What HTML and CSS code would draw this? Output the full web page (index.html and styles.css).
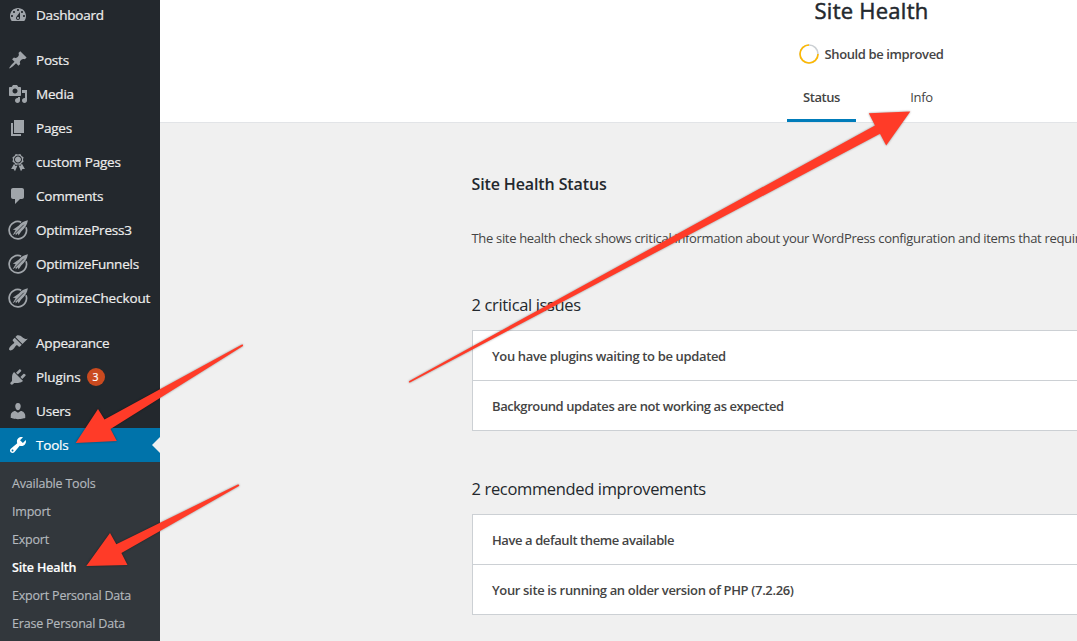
FILE: index.html
```html
<!DOCTYPE html>
<html lang="en">
<head>
<meta charset="utf-8">
<title>Site Health</title>
<link rel="stylesheet" href="styles.css">
</head>
<body>
<div class="admin">
  <nav class="menu">
    <ul class="menu-list">
      <li class="item"><svg class="icon" viewBox="0 0 20 20"><path d="M3.76 16h12.48c1.1-1.37 1.76-3.11 1.76-5 0-4.42-3.58-8-8-8s-8 3.58-8 8c0 1.89.66 3.63 1.76 5zM10 4c.55 0 1 .45 1 1s-.45 1-1 1-1-.45-1-1 .45-1 1-1zM6 6c.55 0 1 .45 1 1s-.45 1-1 1-1-.45-1-1 .45-1 1-1zm8 0c.55 0 1 .45 1 1s-.45 1-1 1-1-.45-1-1 .45-1 1-1zm-5.37 5.55L12 7v6c0 1.1-.9 2-2 2s-2-.9-2-2c0-.57.24-1.08.63-1.45zM4 10c.55 0 1 .45 1 1s-.45 1-1 1-1-.45-1-1 .45-1 1-1zm12 0c.55 0 1 .45 1 1s-.45 1-1 1-1-.45-1-1 .45-1 1-1zm-5 3c0-.55-.45-1-1-1s-1 .45-1 1 .45 1 1 1 1-.45 1-1z"/></svg><span>Dashboard</span></li>
      <li class="item gap"><svg class="icon" viewBox="0 0 20 20"><path d="M10.44 3.02l1.82-1.82 6.36 6.35-1.83 1.82c-1.05-.68-2.48-.57-3.41.36l-.75.75c-.92.93-1.04 2.35-.35 3.41l-1.83 1.82-2.41-2.41-2.8 2.79c-.42.42-3.38 2.71-3.8 2.29s1.86-3.39 2.28-3.81l2.79-2.79L4.1 9.36l1.83-1.82c1.05.69 2.48.57 3.4-.36l.75-.75c.93-.92 1.05-2.35.36-3.41z"/></svg><span>Posts</span></li>
      <li class="item"><svg class="icon" viewBox="0 0 20 20"><path d="M13 11V4c0-.55-.45-1-1-1h-1.67L9 1H5L3.67 3H2c-.55 0-1 .45-1 1v7c0 .55.45 1 1 1h10c.55 0 1-.45 1-1zM7 4.5c1.38 0 2.5 1.12 2.5 2.5S8.38 9.5 7 9.5 4.5 8.38 4.5 7 5.62 4.5 7 4.5zM14 6h5v10.5c0 1.38-1.12 2.5-2.5 2.5S14 17.88 14 16.5s1.12-2.5 2.5-2.5c.17 0 .34.02.5.05V9h-3V6zm-4 8.05V13h2v3.5c0 1.38-1.12 2.5-2.5 2.5S7 17.88 7 16.5 8.12 14 9.5 14c.17 0 .34.02.5.05z"/></svg><span>Media</span></li>
      <li class="item"><svg class="icon" viewBox="0 0 20 20"><path d="M6 15V2h10v13H6zm-1 1h8v2H3V5h2v11z"/></svg><span>Pages</span></li>
      <li class="item"><svg class="icon" viewBox="0 0 20 20"><path d="M4.46 5.16L5 7.46l-.54 2.29 2.01 1.24L7.7 13l2.3-.54 2.3.54 1.23-2.01 2.01-1.24L15 7.46l.54-2.3-2-1.24-1.24-2.01-2.3.55-2.29-.54-1.25 2zm5.55 6.34c-2.21-.01-4-1.8-4-4.01 0-2.2 1.79-3.99 4-3.99 2.2 0 3.99 1.79 3.99 3.99 0 2.22-1.79 4.01-3.99 4.01zm-.02-1C8.33 10.5 7 9.16 7 7.5c0-1.65 1.33-3 2.99-3S13 5.85 13 7.5c0 1.66-1.35 3-3.01 3zm3.84 1.1l-1.28 2.24-2.08-.47L13 19.2l1.4-2.2h2.5zm-7.7.07l1.25 2.25 2.13-.51L7 19.2 5.6 17H3.1z"/></svg><span>custom Pages</span></li>
      <li class="item"><svg class="icon" viewBox="0 0 20 20"><path d="M5 2h9c1.1 0 2 .9 2 2v7c0 1.1-.9 2-2 2h-2l-5 5v-5H5c-1.1 0-2-.9-2-2V4c0-1.1.9-2 2-2z"/></svg><span>Comments</span></li>
      <li class="item"><svg class="icon" viewBox="0 0 20 20"><use href="#rocket"/></svg><span>OptimizePress3</span></li>
      <li class="item"><svg class="icon" viewBox="0 0 20 20"><use href="#rocket"/></svg><span>OptimizeFunnels</span></li>
      <li class="item wide"><svg class="icon" viewBox="0 0 20 20"><use href="#rocket"/></svg><span>OptimizeCheckout</span></li>
      <li class="item gap"><svg class="icon" viewBox="0 0 20 20"><path d="M14.48 11.06L7.41 3.99l1.5-1.5c.5-.56 2.3-.47 3.51.32 1.21.8 1.43 1.28 2.91 2.1 1.18.64 2.45 1.26 4.45.85zm-.71.71L6.7 4.7 4.93 6.47c-.39.39-.39 1.02 0 1.41l1.06 1.06c.39.39.39 1.03 0 1.42-.6.6-1.43 1.11-2.21 1.69-.35.26-.7.53-1.01.84C1.43 14.23.4 16.08 1.4 17.07c.99 1 2.84-.03 4.18-1.36.31-.31.58-.66.85-1.02.57-.78 1.08-1.61 1.69-2.21.39-.39 1.02-.39 1.41 0l1.06 1.06c.39.39 1.02.39 1.41 0z"/></svg><span>Appearance</span></li>
      <li class="item wide"><svg class="icon" viewBox="0 0 20 20"><path d="M13.11 4.36L9.87 7.6 8 5.73l3.24-3.24c.35-.34 1.05-.2 1.56.32.52.51.66 1.21.31 1.55zm-8 1.77l.91-1.12 9.01 9.01-1.19.84c-.71.71-2.63 1.16-3.82 1.16H6.14L4.9 17.26c-.59.59-1.54.59-2.12 0-.59-.58-.59-1.53 0-2.12l1.24-1.24v-3.88c0-1.13.4-3.19 1.09-3.89zm7.26 3.97l3.24-3.24c.34-.35 1.04-.21 1.55.31.52.51.66 1.21.31 1.55l-3.24 3.25z"/></svg><span>Plugins</span><b class="count">3</b></li>
      <li class="item"><svg class="icon" viewBox="0 0 20 20"><path d="M10 9.25c-2.27 0-2.73-3.44-2.73-3.44C7 4.02 7.82 2 9.97 2c2.16 0 2.98 2.02 2.71 3.81 0 0-.41 3.44-2.68 3.44zm0 2.57L12.72 10c2.39 0 4.52 2.33 4.52 4.53v2.49s-3.65 1.13-7.24 1.13c-3.65 0-7.24-1.13-7.24-1.13v-2.49c0-2.25 1.94-4.48 4.47-4.48z"/></svg><span>Users</span></li>
      <li class="item current"><svg class="icon" viewBox="0 0 20 20"><path d="M16.68 9.77c-1.34 1.34-3.3 1.67-4.95.99l-5.41 6.52c-.99.99-2.59.99-3.58 0s-.99-2.59 0-3.57l6.52-5.42c-.68-1.65-.35-3.61.99-4.95 1.28-1.28 3.12-1.62 4.72-1.06l-2.89 2.89 2.82 2.82 2.86-2.87c.53 1.58.18 3.39-1.08 4.65zM3.81 16.21c.4.39 1.04.39 1.43 0 .4-.4.4-1.04 0-1.43-.39-.4-1.03-.4-1.43 0-.39.39-.39 1.03 0 1.43z"/></svg><span>Tools</span></li>
    </ul>
    <ul class="submenu">
      <li>Available Tools</li>
      <li>Import</li>
      <li>Export</li>
      <li class="active">Site Health</li>
      <li>Export Personal Data</li>
      <li>Erase Personal Data</li>
    </ul>
  </nav>
  <main class="page">
    <header class="header">
      <h1 class="title">Site Health</h1>
      <div class="progress">
        <svg class="ring" viewBox="0 0 20 20"><circle class="track" cx="10" cy="10" r="9"/><circle class="value" cx="10" cy="10" r="9" pathLength="100"/></svg>
        <span class="progress-label">Should be improved</span>
      </div>
      <div class="tabs"><span class="tab selected">Status</span><span class="tab">Info</span></div>
    </header>
    <div class="body">
      <h2 class="heading">Site Health Status</h2>
      <p class="intro">The site health check shows critical information about your WordPress configuration and items that require your attention.</p>
      <h3 class="section">2 critical issues</h3>
      <div class="panel">
        <div class="row">You have plugins waiting to be updated</div>
        <div class="row tight">Background updates are not working as expected</div>
      </div>
      <h3 class="section second">2 recommended improvements</h3>
      <div class="panel">
        <div class="row tight">Have a default theme available</div>
        <div class="row">Your site is running an older version of PHP (7.2.26)</div>
      </div>
    </div>
  </main>
</div>
<svg class="arrows" viewBox="0 0 1077 641">
  <defs>
    <g id="rocket">
      <path class="rocket-ring" d="M13.2 2.2A8.7 8.7 0 1 0 18 7.2"/>
      <path d="M19.9 0.3C16.4 0.9 13.2 2.7 10.9 5.4L8.8 7 4.8 9.8 7.6 10.1 6.4 12.2 4.6 15.3 7.9 13.3 7.6 15.6 9.9 13.2 10.5 15.6 13.2 11.4C16.8 8.3 19.2 5 19.9 0.3z"/>
      <path class="rocket-slot" d="M7.4 13.2L15.8 4.7"/>
    </g>
  </defs>
  <path d="M75.7 443L98 409 104.5 419.6 241.5 344.7Q243.5 344 243 346L110.5 429 116.8 441z"/>
  <path d="M86.3 566L110 533 116.3 544.3 237.8 484.6Q239.8 484.2 239 486L121.4 553 127.5 565z"/>
  <path d="M910.3 111.5L868.8 113.3 875 125.4 409.3 381Q408 382.5 410 382.6L880 133.8 886.2 145.5z"/>
</svg>
</body>
</html>
```
FILE: styles.css
```css
* { box-sizing: border-box; }
body {
  margin: 0;
  width: 1077px;
  height: 641px;
  overflow: hidden;
  background: #f0f0f0;
  font-family: "Open Sans", "Noto Sans", sans-serif;
  font-size: 13px;
  color: #444;
}
ul { list-style: none; margin: 0; padding: 0; }
h1, h2, h3, p { margin: 0; }
.admin { display: flex; height: 641px; overflow: hidden; }

.menu { flex: none; width: 160px; background: #23282d; }
.menu-list { margin-top: -2px; }
.item {
  display: flex;
  align-items: center;
  height: 34px;
  padding-left: 8px;
  color: #eee;
  font-size: 13.5px;
  letter-spacing: -0.2px;
  white-space: nowrap;
  -webkit-text-stroke: 0.2px;
}
.item.gap { margin-top: 11px; }
.item.wide { letter-spacing: -0.1px; }
.icon { width: 20px; height: 20px; margin-right: 8px; flex: none; fill: #a0a5aa; }
.rocket-ring { fill: none; stroke: #a0a5aa; stroke-width: 1.7; }
.rocket-slot { fill: none; stroke: #23282d; stroke-width: 0.8; }
.count {
  width: 18px;
  height: 18px;
  margin-left: 6px;
  border-radius: 9px;
  background: #ca4a1f;
  color: #fff;
  font-size: 10.5px;
  font-weight: 500;
  line-height: 18px;
  text-align: center;
}
.item.current { background: #0073aa; color: #fff; }
.item.current .icon { fill: #fff; }
.item.current::after {
  content: "";
  margin-left: auto;
  border: 8px solid transparent;
  border-left: 0;
  border-right-color: #f0f0f0;
}
.submenu { height: 181px; padding: 8px 12px; background: #32373c; }
.submenu li {
  height: 28px;
  line-height: 28px;
  font-size: 12.5px;
  letter-spacing: -0.2px;
  color: #b4b9be;
  white-space: nowrap;
  -webkit-text-stroke: 0.15px;
}
.submenu .active { color: #fff; font-weight: 600; letter-spacing: -0.15px; }

.page { flex: none; width: 1423px; }
.header {
  height: 123px;
  display: flex;
  flex-direction: column;
  align-items: center;
  background: #fff;
  border-bottom: 1px solid #e2e4e7;
}
.title {
  height: 24px;
  line-height: 20px;
  color: #23282d;
  font-size: 22px;
  font-weight: 400;
  letter-spacing: 0.25px;
  -webkit-text-stroke: 0.5px;
}
.progress { display: flex; align-items: center; gap: 5px; height: 20px; margin-top: 20px; }
.ring { width: 20px; height: 20px; }
.track, .value { fill: none; stroke: #ccd0d4; stroke-width: 1.6; }
.value { stroke: #ffb900; stroke-dasharray: 75 100; stroke-dashoffset: -25; transform: rotate(-90deg); transform-origin: 10px 10px; }
.progress-label { font-weight: 600; letter-spacing: -0.38px; }
.tabs { display: grid; grid-template-columns: 69px 69px; gap: 31px; margin-top: 9px; }
.tab { height: 49px; line-height: 48px; text-align: center; letter-spacing: -0.3px; }
.selected { font-weight: 600; letter-spacing: -0.45px; border-bottom: 3px solid #007cba; }
.body { width: 800px; margin: 0 auto; }
.heading { padding-top: 48px; line-height: 26px; color: #23282d; font-size: 16px; font-weight: 600; letter-spacing: -0.12px; white-space: nowrap; }
.intro { margin-top: 31px; line-height: 20px; letter-spacing: -0.32px; white-space: nowrap; }
.section { height: 26px; margin-top: 44px; line-height: 26px; color: #23282d; font-size: 16.5px; font-weight: 400; letter-spacing: -0.35px; white-space: nowrap; }
.section.second { margin-top: 45px; }
.panel { margin-top: 12px; margin-left: 0.5px; background: #fff; border: 1px solid #ccd0d4; }
.row { height: 50px; padding-left: 19px; line-height: 50px; font-weight: 600; letter-spacing: -0.35px; white-space: nowrap; }
.row.tight { letter-spacing: -0.41px; }
.row:first-child { height: 49px; }
.row + .row { border-top: 1px solid #ccd0d4; }

.arrows {
  position: absolute;
  inset: 0;
  width: 1077px;
  height: 641px;
  fill: #ff3b28;
  pointer-events: none;
}
.arrows > path { filter: drop-shadow(0 0 1.2px rgba(0, 0, 0, 0.4)); }
```
